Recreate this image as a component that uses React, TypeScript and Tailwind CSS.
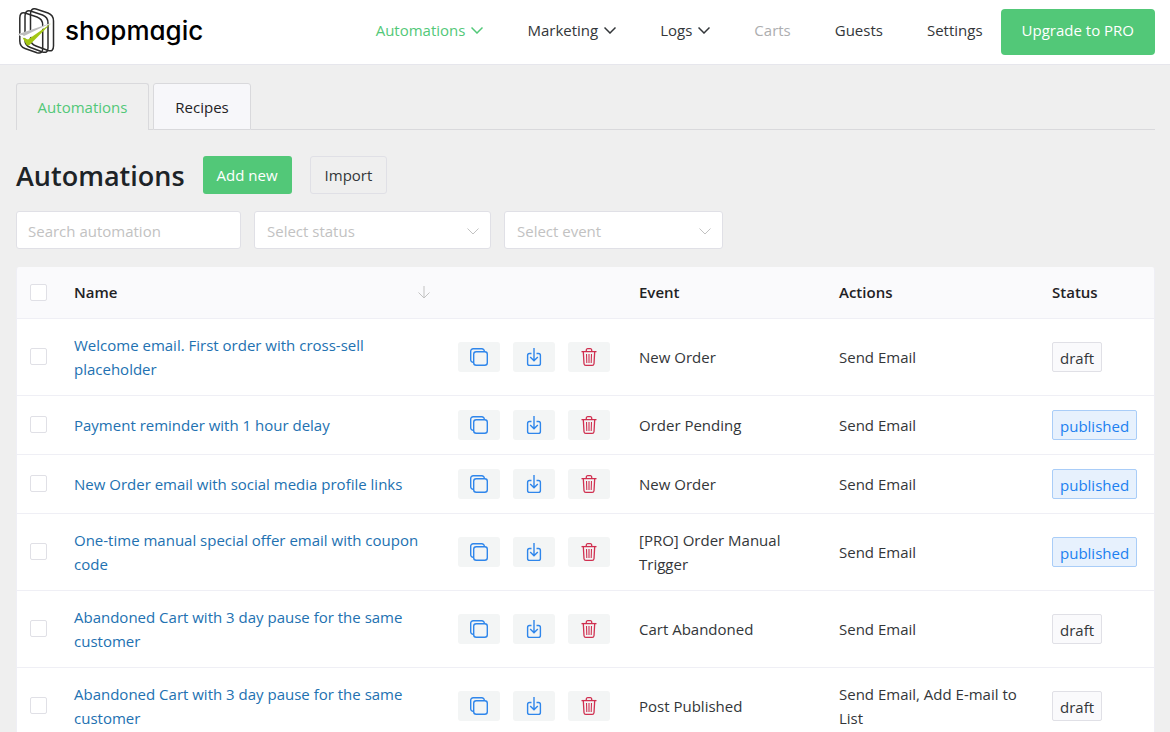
type Automation = {
  name: string;
  event: string;
  actions: string;
  status: "draft" | "published";
};

const automations: Automation[] = [
  {
    name: "Welcome email. First order with cross-sell placeholder",
    event: "New Order",
    actions: "Send Email",
    status: "draft",
  },
  {
    name: "Payment reminder with 1 hour delay",
    event: "Order Pending",
    actions: "Send Email",
    status: "published",
  },
  {
    name: "New Order email with social media profile links",
    event: "New Order",
    actions: "Send Email",
    status: "published",
  },
  {
    name: "One-time manual special offer email with coupon code",
    event: "[PRO] Order Manual Trigger",
    actions: "Send Email",
    status: "published",
  },
  {
    name: "Abandoned Cart with 3 day pause for the same customer",
    event: "Cart Abandoned",
    actions: "Send Email",
    status: "draft",
  },
  {
    name: "Abandoned Cart with 3 day pause for the same customer",
    event: "Post Published",
    actions: "Send Email, Add E-mail to List",
    status: "draft",
  },
];

const navItems = [
  { label: "Automations", menu: true, color: "text-[#52c878]" },
  { label: "Marketing", menu: true, color: "text-[#333639]" },
  { label: "Logs", menu: true, color: "text-[#333639]" },
  { label: "Carts", menu: false, color: "text-[#adaeb0]" },
  { label: "Guests", menu: false, color: "text-[#333639]" },
  { label: "Settings", menu: false, color: "text-[#333639]" },
];

const Logo = () => (
  <a href="#" className="flex items-center gap-[9px] pb-[3px]">
    <svg width="38" height="46" viewBox="0 0 38 46" fill="none">
      <g stroke="#2b2b2b" strokeWidth="1.5">
        <path d="M12.5 6C12.5 2 14.5 0 18 1L30 5C34 6.500 35.500 9 35.500 13V38C35.500 42.500 33.500 43.500 30 42.500L18 38C14 36.500 12.500 35 12.500 31Z" />
        <path d="M7 8C7 4 9 2 12.500 3L24.500 7C28.500 8.500 30 11 30 15V40C30 44 28 45 24.500 44L12.500 39.500C8.500 38 7 36.500 7 32.500Z" />
        <path d="M1.800 10C1.800 6 3.500 4 7 5L19 9C23 10.500 24.700 13 24.700 17V40.500C24.700 44.500 22.700 45.700 19 44.700L7 40.500C3 39 1.800 37 1.800 33Z" />
      </g>
      <path d="M-.500 26.500L33 15L9 31.500L4 28.500Z" fill="#fff" />
      <path d="M-.500 26.500L33 15L6 28L4.500 27Z" fill="#bdbdbd" />
      <path d="M4.500 29.500L10 31.500L33 15.500L11 37.500Q9 38 8 36Z" fill="#a3c614" />
    </svg>
    <span className="font-['Inter'] text-[26px] leading-8 font-medium text-black [font-feature-settings:'cv11']">
      shopmagic
    </span>
  </a>
);

const Chevron = ({ className }: { className: string }) => (
  <svg viewBox="0 0 12 8" width="12" height="8" fill="none" stroke="currentColor" className={className}>
    <path d="M.500 1.500L6 7L11.500 1.500" />
  </svg>
);

const CopyIcon = () => (
  <svg width="20" height="20" viewBox="0 0 20 20" fill="none" stroke="#2f86eb" strokeWidth="1.4">
    <rect x="4.700" y="4.700" width="13.600" height="13.600" rx="2.500" />
    <path d="M4.700 15.300H4.200A2.500 2.500 0 0 1 1.700 12.800V4.200A2.500 2.500 0 0 1 4.200 1.700H12.800A2.500 2.500 0 0 1 15.300 4.200V4.700" />
  </svg>
);

const DownloadIcon = () => (
  <svg width="20" height="20" viewBox="0 0 20 20" fill="none" stroke="#2f86eb" strokeWidth="1.400">
    <path d="M7.500 6.500H5.500A2 2 0 0 0 3.600 8.500V16.400A2 2 0 0 0 5.600 18.400H14.400A2 2 0 0 0 16.400 16.400V8.500A2 2 0 0 0 14.500 6.500H12.500" />
    <path d="M10 1V13.500M6.200 10L10 13.800L13.800 10" />
  </svg>
);

const TrashIcon = () => (
  <svg width="20" height="20" viewBox="0 0 20 20" fill="none" stroke="#d03050" strokeWidth="1.300">
    <path d="M2.500 4.600H17.500" />
    <path d="M7.300 4.600V3.200A1.400 1.400 0 0 1 8.700 1.700H11.300A1.400 1.400 0 0 1 12.700 3.200V4.600" />
    <path d="M4.300 4.600L5 16.800A1.800 1.800 0 0 0 6.800 18.400H13.200A1.800 1.800 0 0 0 15 16.800L15.700 4.600" />
    <path strokeWidth="1.100" d="M7.500 7L7.800 16M10 7V16M12.500 7L12.200 16" />
  </svg>
);

const rowActions = [
  { label: "Duplicate", icon: <CopyIcon /> },
  { label: "Export", icon: <DownloadIcon /> },
  { label: "Delete", icon: <TrashIcon /> },
];

const Checkbox = ({ label }: { label: string }) => (
  <input
    type="checkbox"
    aria-label={label}
    className="block size-[17px] appearance-none rounded-xs border border-[#e0e0e6] bg-white checked:border-[#52c878] checked:bg-[#52c878]"
  />
);

const FilterSelect = ({ label, width }: { label: string; width: string }) => (
  <div className={`relative ${width}`}>
    <select
      aria-label={label}
      className="h-[38px] w-full appearance-none rounded-[3px] border border-[#e0e0e6] bg-white px-3 pt-0.5 text-[#c2c2c2]">
      <option>{label}</option>
    </select>
    <Chevron className="pointer-events-none absolute top-4 right-3 stroke-[#c2c2c2]" />
  </div>
);

const Row = ({ name, event, actions, status }: Automation) => (
  <tr className="border-b border-[#efeff5] bg-white">
    <td className="px-[13px] py-3.5">
      <Checkbox label={`Select ${name}`} />
    </td>
    <td className="px-[13px] py-3.5">
      <a href="#" className="block text-[#2271b1]">
        {name}
      </a>
    </td>
    <td className="px-[13px] py-3.5">
      <div className="flex gap-[13px]">
        {rowActions.map((action) => (
          <button
            key={action.label}
            aria-label={action.label}
            className="flex h-[30px] w-[42px] items-center justify-center rounded-[3px] bg-[#f3f5f5]">
            {action.icon}
          </button>
        ))}
      </div>
    </td>
    <td className="px-[13px] py-3.5">{event}</td>
    <td className="px-[13px] py-3.5">{actions}</td>
    <td className="px-[13px] py-3.5">
      <span
        className={`flex h-[30px] w-fit items-center rounded-xs border px-[7px] pt-0.5 ${
          status === "published"
            ? "border-[#a9cdf8] bg-[#e7f1fd] text-[#2080f0]"
            : "border-[#e0e0e6] bg-[#fafafc]"
        }`}>
        {status}
      </span>
    </td>
  </tr>
);

export default function App() {
  return (
    <div className="min-h-screen bg-[#efefef] font-['Open_Sans','Noto_Sans',sans-serif] text-[15px] leading-6 text-[#333639]">
      <header className="flex h-[65px] items-center justify-between border-b border-[#e6e6ec] bg-white pr-[15px] pl-[18px]">
        <Logo />
        <div className="flex items-center gap-[18px]">
          <nav className="flex gap-11 pb-1">
            {navItems.map((item) => (
              <a key={item.label} href="#" className={`flex items-center gap-1.5 ${item.color}`}>
                {item.label}
                {item.menu && <Chevron className="stroke-[1.5]" />}
              </a>
            ))}
          </nav>
          <button className="h-[46px] rounded-sm bg-[#52c878] px-[21px] pb-1 text-white">
            Upgrade to PRO
          </button>
        </div>
      </header>

      <main className="pt-[18px] pr-[15px] pl-4">
        <div className="flex h-[47px]">
          <a
            href="#"
            className="flex w-[133px] items-center justify-center rounded-t-[3px] border border-b-0 border-[#d9d9dc] text-[#52c878]">
            Automations
          </a>
          <div className="w-1 border-b border-[#d9d9dc]" />
          <a
            href="#"
            className="flex w-[98px] items-center justify-center rounded-t-[3px] border border-[#d9d9dc] bg-[#f7f7fa] text-[#1f2225]">
            Recipes
          </a>
          <div className="flex-1 border-b border-[#d9d9dc]" />
        </div>

        <div className="mt-[26px] flex items-center gap-[18px]">
          <h1 className="pt-0.5 text-[27px] leading-9 font-semibold text-[#1d2327]">Automations</h1>
          <button className="h-[38px] rounded-[3px] bg-[#52c878] px-3.5 text-white">Add new</button>
          <button className="h-[38px] rounded-[3px] border border-[#e0e0e6] px-3.5">Import</button>
        </div>

        <div className="mt-[17px] flex gap-[13px]">
          <input
            type="text"
            aria-label="Search automation"
            placeholder="Search automation"
            className="h-[38px] w-[225px] rounded-[3px] border border-[#e0e0e6] bg-white px-[11px] pt-0.5 placeholder:text-[#c2c2c2]"
          />
          <FilterSelect label="Select status" width="w-[237px]" />
          <FilterSelect label="Select event" width="w-[219px]" />
        </div>

        <div className="mt-[18px] overflow-hidden rounded-t-[3px] border-x border-[#efeff5]">
          <table className="w-full table-fixed border-collapse text-left">
            <colgroup>
              <col className="w-[44px]" />
              <col className="w-[384px]" />
              <col className="w-[181px]" />
              <col className="w-[200px]" />
              <col className="w-[213px]" />
              <col />
            </colgroup>
            <thead>
              <tr className="h-[51px] border-b border-[#efeff5] bg-[#fafafc] text-[#1f2225]">
                <th className="px-[13px]">
                  <Checkbox label="Select all" />
                </th>
                <th className="px-[13px] font-semibold" aria-sort="none">
                  <div className="flex items-center justify-between pr-[2px]">
                    Name
                    <svg width="12" height="14" viewBox="0 0 12 14" fill="none" stroke="#c2c2c2">
                      <path d="M6 1V13M.500 7.500L6 13L11.500 7.500" />
                    </svg>
                  </div>
                </th>
                <th aria-label="Row actions" />
                <th className="px-[13px] font-semibold">Event</th>
                <th className="px-[13px] font-semibold">Actions</th>
                <th className="px-[13px] font-semibold">Status</th>
              </tr>
            </thead>
            <tbody>
              {automations.map((automation, i) => (
                <Row key={i} {...automation} />
              ))}
            </tbody>
          </table>
        </div>
      </main>
    </div>
  );
}
